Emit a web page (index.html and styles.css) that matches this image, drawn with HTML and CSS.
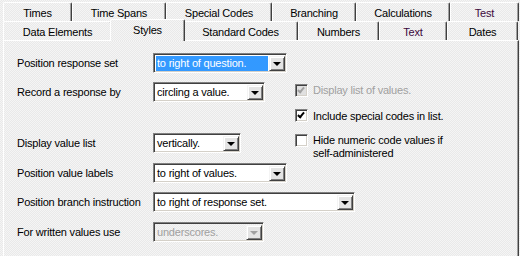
FILE: index.html
```html
<!DOCTYPE html>
<html lang="en">
<head>
  <meta charset="UTF-8" />
  <title>Styles</title>
  <link rel="stylesheet" href="styles.css">
</head>
<body>

  <!-- Tab strip, two rows -->
  <div class="tabs">
    <div class="tab-row back">
      <div class="tab t-times">Times</div>
      <div class="tab t-spans">Time Spans</div>
      <div class="tab t-special">Special Codes</div>
      <div class="tab t-branch">Branching</div>
      <div class="tab t-calc">Calculations</div>
      <div class="tab t-test purple">Test</div>
    </div>
    <div class="tab-row front">
      <div class="tab t-data">Data Elements</div>
      <div class="tab t-styles selected">Styles</div>
      <div class="tab t-standard">Standard Codes</div>
      <div class="tab t-numbers">Numbers</div>
      <div class="tab t-text purple">Text</div>
      <div class="tab t-dates">Dates</div>
    </div>
  </div>

  <!-- Styles page -->
  <div class="panel">
    <div class="form">
      <div class="label r1">Position response set</div>
      <div class="combo w134 r1">
        <span class="value highlight">to right of question.</span>
        <span class="drop"></span>
      </div>

      <div class="label r2">Record a response by</div>
      <div class="combo w112 r2">
        <span class="value">circling a value.</span>
        <span class="drop"></span>
      </div>

      <div class="options">
        <div class="option disabled">
          <span class="check checked"></span>
          <span>Display list of values.</span>
        </div>
        <div class="option">
          <span class="check checked"></span>
          <span>Include special codes in list.</span>
        </div>
        <div class="option">
          <span class="check"></span>
          <span>Hide numeric code values if<br>self-administered</span>
        </div>
      </div>

      <div class="label r3">Display value list</div>
      <div class="combo w88 r3">
        <span class="value">vertically.</span>
        <span class="drop"></span>
      </div>

      <div class="label r4">Position value labels</div>
      <div class="combo w134 r4">
        <span class="value">to right of values.</span>
        <span class="drop"></span>
      </div>

      <div class="label r5">Position branch instruction</div>
      <div class="combo w202 r5 wide">
        <span class="value">to right of response set.</span>
        <span class="drop"></span>
      </div>

      <div class="label r6">For written values use</div>
      <div class="combo w111 r6 disabled">
        <span class="value">underscores.</span>
        <span class="drop"></span>
      </div>
    </div>
  </div>

</body>
</html>
```

FILE: styles.css
```css
body {
  margin: 0;
  padding: 0;
  width: 520px;
  height: 256px;
  overflow: hidden;
  font-family: "Liberation Sans", Arial, sans-serif;
  font-size: 11px;
  letter-spacing: -0.2px;
  color: #000;
  background-color: #efefef;
  background-image: repeating-conic-gradient(#e9e9e9 0 25%, #f5f5f5 0 50%);
  background-size: 2px 2px;
}

/* ---- tabs ---- */

.tabs {
  margin: 2px 1px 0 3px;
}

.tab-row {
  display: flex;
  height: 19px;
}

.tab {
  box-sizing: border-box;
  height: 19px;
  border-top: 1px solid #fff;
  border-left: 1px solid #fff;
  border-right: 1px solid #404040;
  box-shadow: inset -1px 0 #a0a0a0;
  border-radius: 2px 2px 0 0;
  display: flex;
  align-items: center;
  justify-content: center;
  padding-top: 2px;
  white-space: nowrap;
}

.purple {
  color: #3c083c;
}

.front .tab {
  padding-top: 1px;
}

.tab.selected {
  height: 22px;
  margin: -2px -2px 0 -2px;
  border-bottom: none;
  padding-top: 0;
  padding-bottom: 2px;
  position: relative;
  z-index: 2;
  background-color: #efefef;
  background-image: repeating-conic-gradient(#e9e9e9 0 25%, #f5f5f5 0 50%);
  background-size: 2px 2px;
}

.t-times { width: 69px; }
.t-spans { width: 94px; }
.t-special { width: 106px; }
.t-branch { width: 84px; }
.t-calc { width: 94px; }
.t-test { width: 69px; }

.t-data { width: 109px; }
.t-styles { width: 75px; }
.t-standard { width: 115px; }
.t-numbers { width: 81px; }
.t-text { width: 68px; }
.t-dates { width: 71px; }

/* ---- page ---- */

.panel {
  box-sizing: border-box;
  margin: 0 1px 0 3px;
  height: 220px;
  border-top: 1px solid #fff;
  border-left: 1px solid #fff;
  border-right: 1px solid #404040;
  box-shadow: inset -1px 0 #a0a0a0;
  padding: 12px 0 0 13px;
}

.form {
  display: grid;
  grid-template-columns: 136px 142px 200px;
  grid-template-rows: 29px 51px 30px 29px 30px 20px;
  align-items: start;
}

.label {
  grid-column: 1;
  height: 20px;
  line-height: 20px;
  white-space: nowrap;
}

.r1 { grid-row: 1; }
.r2 { grid-row: 2; }
.r3 { grid-row: 3; }
.r4 { grid-row: 4; }
.r5 { grid-row: 5; }
.r6 { grid-row: 6; }

/* ---- combo boxes ---- */

.combo {
  grid-column: 2;
  box-sizing: border-box;
  height: 20px;
  display: flex;
  align-items: stretch;
  background: #fff;
  border-top: 1px solid #808080;
  border-left: 1px solid #808080;
  border-right: 1px solid #fff;
  border-bottom: 1px solid #fff;
  box-shadow: inset 1px 1px #404040, inset -1px -1px #d4d0c8;
  padding: 2px 1px 1px 2px;
}

.combo.wide {
  grid-column: 2 / 4;
}

.w134 { width: 134px; }
.w112 { width: 112px; }
.w88 { width: 88px; }
.w111 { width: 111px; }
.w202 { width: 202px; }

.value {
  flex: 1;
  line-height: 15px;
  padding-left: 1px;
  white-space: nowrap;
  overflow: hidden;
}

.value.highlight {
  background: #3399ff;
  color: #fff;
  margin-right: 1px;
}

.drop {
  width: 16px;
  box-sizing: border-box;
  background: #e4e4e4;
  border-top: 1px solid #f4f4f4;
  border-left: 1px solid #f4f4f4;
  border-right: 1px solid #404040;
  border-bottom: 1px solid #404040;
  box-shadow: inset 1px 1px #fff, inset -1px -1px #808080;
  display: flex;
  align-items: center;
  justify-content: center;
}

.drop::after {
  content: "";
  border-left: 4px solid transparent;
  border-right: 4px solid transparent;
  border-top: 4px solid #000;
  margin-top: 1px;
}

.combo.disabled {
  background: transparent;
  color: #a0a0a0;
}

.combo.disabled .drop::after {
  border-top-color: #a0a0a0;
}

/* ---- checkboxes ---- */

.options {
  grid-column: 3;
  grid-row: 2 / 4;
  padding: 2px 0 0 0;
  display: flex;
  flex-direction: column;
  gap: 12px;
}

.option {
  display: flex;
  align-items: flex-start;
  gap: 5px;
  line-height: 13px;
}

.option:first-child,
.option:nth-child(2) {
  align-items: center;
  height: 13px;
}

.option:nth-child(2) span:last-child {
  margin-top: 1px;
}

.option.disabled {
  color: #a0a0a0;
}

.check {
  flex: none;
  box-sizing: border-box;
  width: 13px;
  height: 13px;
  background: #fff;
  border-top: 1px solid #808080;
  border-left: 1px solid #808080;
  border-right: 1px solid #fff;
  border-bottom: 1px solid #fff;
  box-shadow: inset 1px 1px #404040, inset -1px -1px #d4d0c8;
  position: relative;
}

.check.checked::after {
  content: "";
  position: absolute;
  left: 3px;
  top: 1px;
  width: 2px;
  height: 5px;
  border-right: 2px solid #000;
  border-bottom: 2px solid #000;
  transform: rotate(40deg);
  transform-origin: center;
}

.option.disabled .check {
  background: #e0e0e0;
}

.option.disabled .check.checked::after {
  border-color: #a0a0a0;
}
```
